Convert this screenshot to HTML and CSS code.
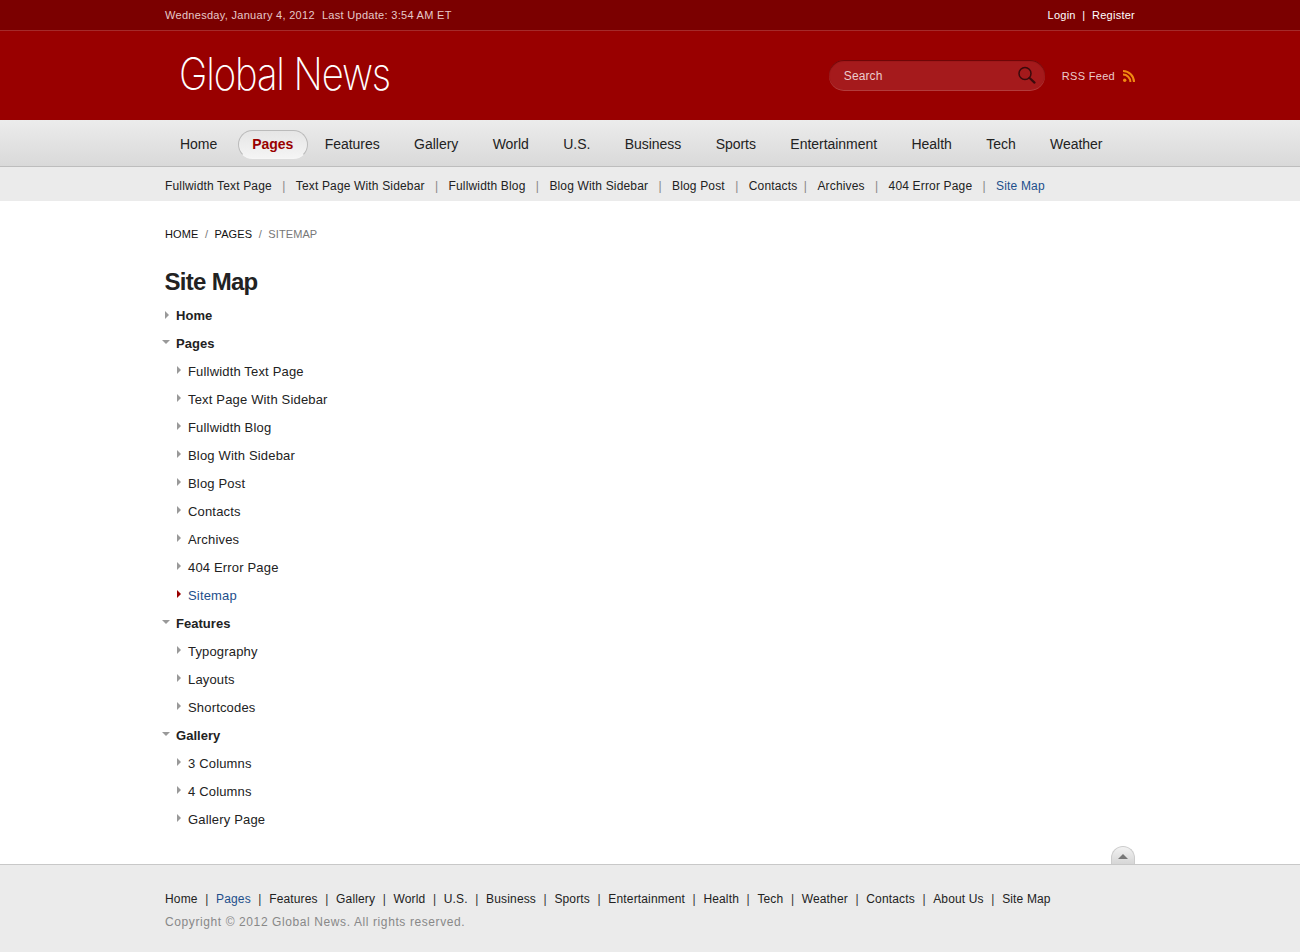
FILE: index.html
```html
<!DOCTYPE html>
<html lang="en">
<head>
<meta charset="utf-8">
<title>Site Map - Global News</title>
<link rel="stylesheet" href="styles.css">
</head>
<body>
<div class="topbar">
  <div class="wrap topbar-in">
    <div class="date"><span>Wednesday, January 4, 2012</span><span>Last Update: 3:54 AM ET</span></div>
    <div class="auth"><a href="#">Login</a><span>|</span><a href="#">Register</a></div>
  </div>
</div>
<header class="header">
  <div class="wrap header-in">
    <a class="logo" href="#">Global News</a>
    <div class="header-right">
      <div class="search">
        <span class="search-label">Search</span>
        <svg class="search-icon" width="18" height="18" viewBox="0 0 18 18"><circle cx="7" cy="7.5" r="6" fill="none" stroke="#3a0a0c" stroke-width="1.5"/><path d="M11.6 12l4.9 4.6" stroke="#3a0a0c" stroke-width="2.2" stroke-linecap="round"/></svg>
      </div>
      <a class="rss" href="#">RSS Feed
        <svg width="12" height="12" viewBox="0 0 12 12"><circle cx="1.7" cy="10.3" r="1.7" fill="#f08a12"/><path d="M0 4.6a7.4 7.4 0 0 1 7.4 7.4M0 1a11 11 0 0 1 11 11" fill="none" stroke="#f08a12" stroke-width="2"/></svg>
      </a>
    </div>
  </div>
</header>
<nav class="nav">
  <ul class="wrap nav-list">
    <li><a href="#">Home</a></li>
    <li class="active"><a href="#">Pages</a></li>
    <li><a href="#">Features</a></li>
    <li><a href="#">Gallery</a></li>
    <li><a href="#">World</a></li>
    <li><a href="#">U.S.</a></li>
    <li><a href="#">Business</a></li>
    <li><a href="#">Sports</a></li>
    <li><a href="#">Entertainment</a></li>
    <li><a href="#">Health</a></li>
    <li><a href="#">Tech</a></li>
    <li><a href="#">Weather</a></li>
  </ul>
</nav>
<div class="subnav">
  <ul class="wrap subnav-list">
    <li><a href="#">Fullwidth Text Page</a></li>
    <li><a href="#">Text Page With Sidebar</a></li>
    <li><a href="#">Fullwidth Blog</a></li>
    <li><a href="#">Blog With Sidebar</a></li>
    <li><a href="#">Blog Post</a></li>
    <li class="tight"><a href="#">Contacts</a></li>
    <li><a href="#">Archives</a></li>
    <li><a href="#">404 Error Page</a></li>
    <li class="current"><a href="#">Site Map</a></li>
  </ul>
</div>
<main class="wrap main">
  <div class="crumbs"><a href="#">HOME</a><i>/</i><a href="#">PAGES</a><i>/</i><span>SITEMAP</span></div>
  <h1>Site Map</h1>
  <ul class="tree">
    <li class="closed"><a href="#">Home</a></li>
    <li class="open"><a href="#">Pages</a>
      <ul>
        <li><a href="#">Fullwidth Text Page</a></li>
        <li><a href="#">Text Page With Sidebar</a></li>
        <li><a href="#">Fullwidth Blog</a></li>
        <li><a href="#">Blog With Sidebar</a></li>
        <li><a href="#">Blog Post</a></li>
        <li><a href="#">Contacts</a></li>
        <li><a href="#">Archives</a></li>
        <li><a href="#">404 Error Page</a></li>
        <li class="current"><a href="#">Sitemap</a></li>
      </ul>
    </li>
    <li class="open"><a href="#">Features</a>
      <ul>
        <li><a href="#">Typography</a></li>
        <li><a href="#">Layouts</a></li>
        <li><a href="#">Shortcodes</a></li>
      </ul>
    </li>
    <li class="open"><a href="#">Gallery</a>
      <ul>
        <li><a href="#">3 Columns</a></li>
        <li><a href="#">4 Columns</a></li>
        <li><a href="#">Gallery Page</a></li>
      </ul>
    </li>
  </ul>
</main>
<footer class="footer">
  <div class="wrap footer-in">
    <a class="totop" href="#" aria-label="Back to top"></a>
    <ul class="footer-list">
      <li><a href="#">Home</a></li>
      <li class="current"><a href="#">Pages</a></li>
      <li><a href="#">Features</a></li>
      <li><a href="#">Gallery</a></li>
      <li><a href="#">World</a></li>
      <li><a href="#">U.S.</a></li>
      <li><a href="#">Business</a></li>
      <li><a href="#">Sports</a></li>
      <li><a href="#">Entertainment</a></li>
      <li><a href="#">Health</a></li>
      <li><a href="#">Tech</a></li>
      <li><a href="#">Weather</a></li>
      <li><a href="#">Contacts</a></li>
      <li><a href="#">About Us</a></li>
      <li><a href="#">Site Map</a></li>
    </ul>
    <p class="copy">Copyright © 2012 Global News. All rights reserved.</p>
  </div>
</footer>
</body>
</html>
```
FILE: styles.css
```css
* { box-sizing: border-box; }
html, body { margin: 0; padding: 0; }
body { font-family: "Liberation Sans", Arial, sans-serif; background: #fff; color: #222; }
a { color: inherit; text-decoration: none; }
ul { list-style: none; margin: 0; padding: 0; }
.wrap { width: 970px; margin-left: 165px; }

.topbar { height: 31px; background: #7b0000; border-bottom: 1px solid #a52a2a; }
.topbar-in { display: flex; justify-content: space-between; align-items: center; height: 30px; font-size: 11px; }
.date { display: flex; gap: 7px; color: #e6c8c8; letter-spacing: 0.3px; }
.auth { display: flex; gap: 6.6px; color: #fff; letter-spacing: 0.25px; }

.header { height: 89px; background: #990000; }
.header-in { display: flex; justify-content: space-between; align-items: center; height: 89px; }
.logo { display: inline-block; margin: 0 0 4px 14px; color: #fff; font-family: "Inter", sans-serif; font-weight: 200; font-size: 45px; letter-spacing: -1.3px; line-height: 50px; transform: scaleX(0.85); transform-origin: left center; }
.header-right { display: flex; align-items: center; gap: 17px; }
.search { width: 216px; height: 30px; margin-bottom: 1px; border-radius: 15px; background: #a51a1c; box-shadow: inset 0 1px 1px #6a0506, 0 1px 0 #b33c3c; display: flex; align-items: center; justify-content: space-between; padding: 0 9px 0 15px; font-size: 12px; letter-spacing: 0.1px; color: #eccccc; }
.search-label { padding-top: 2px; }
.rss { display: flex; align-items: center; gap: 8px; font-size: 11px; color: #eccccc; letter-spacing: 0.3px; }

.nav { height: 47px; background: linear-gradient(#ececec, #d9d9d9); border-bottom: 1px solid #bdbdbd; }
.nav-list { display: flex; align-items: center; height: 46px; padding-top: 2px; font-size: 14px; letter-spacing: -0.03px; color: #222; }
.nav-list li { padding: 0 15px; margin-right: 4.4px; }
.nav-list a { display: block; }
.nav-list .active { height: 29px; line-height: 27px; margin: 0 2px 0 1.2px; padding: 0 13.4px; border-radius: 15px; border: 1px solid #bbb; border-bottom-color: #f6f6f6; background: linear-gradient(#e6e6e6, #f4f4f4); color: #990000; font-weight: bold; }

.subnav { height: 34px; background: #ebebeb; }
.subnav-list { display: flex; align-items: center; height: 37px; font-size: 12px; letter-spacing: 0.16px; color: #222; }
.subnav-list li { display: flex; align-items: center; }
.subnav-list li + li::before { content: "|"; color: #888; margin: 0 10.3px; }
.subnav-list .tight + li::before { margin: 0 10.4px 0 6.4px; }
.subnav-list .current a { color: #1d4f8b; }

.main { padding-top: 27px; height: 663px; }
.crumbs { display: flex; gap: 6.5px; font-size: 11px; line-height: 13px; letter-spacing: 0.1px; color: #111; }
.crumbs i { font-style: normal; color: #777; }
.crumbs span { color: #777; }
h1 { margin: 27px 0 0 -0.5px; font-size: 24px; line-height: 28px; letter-spacing: -0.7px; color: #222; }
.tree { margin-top: 6px; font-size: 13px; line-height: 28px; }
.tree > li { padding-left: 11px; position: relative; font-weight: bold; letter-spacing: 0.03px; color: #222; }
.tree ul { padding-left: 12px; font-weight: normal; letter-spacing: 0.17px; }
.tree ul li { position: relative; }
.tree li::before { content: ""; position: absolute; border-style: solid; border-color: transparent; }
.tree .closed::before, .tree ul li::before { left: 0; top: 9px; border-width: 4px 0 4px 4px; border-left-color: #999; }
.tree ul li::before { left: -11px; top: 8px; }
.tree .open::before { left: -3px; top: 10px; border-width: 4px 4.5px 0; border-top-color: #999; }
.tree ul .current::before { border-left-color: #990000; }
.tree ul .current a { color: #1d4f8b; }

.footer { height: 88px; background: #ebebeb; border-top: 1px solid #c8c8c8; }
.footer-in { position: relative; padding-top: 27px; }
.totop { position: absolute; right: 0; top: -19px; width: 24px; height: 18px; border-radius: 12px 12px 0 0; background: linear-gradient(#f2f2f2, #d6d6d6); border: 1px solid #ccc; border-bottom: 0; }
.totop::after { content: ""; position: absolute; left: 6px; top: 7px; border-style: solid; border-color: transparent; border-width: 0 5px 5px; border-bottom-color: #777; }
.footer-list { display: flex; font-size: 12px; line-height: 14px; letter-spacing: 0.15px; color: #222; }
.footer-list li { display: flex; align-items: center; }
.footer-list li + li::before { content: "|"; color: #333; margin: 0 7.55px; }
.footer-list .current a { color: #1d4f8b; }
.copy { margin: 9px 0 0; font-size: 12px; line-height: 14px; color: #888; letter-spacing: 0.6px; }
```
